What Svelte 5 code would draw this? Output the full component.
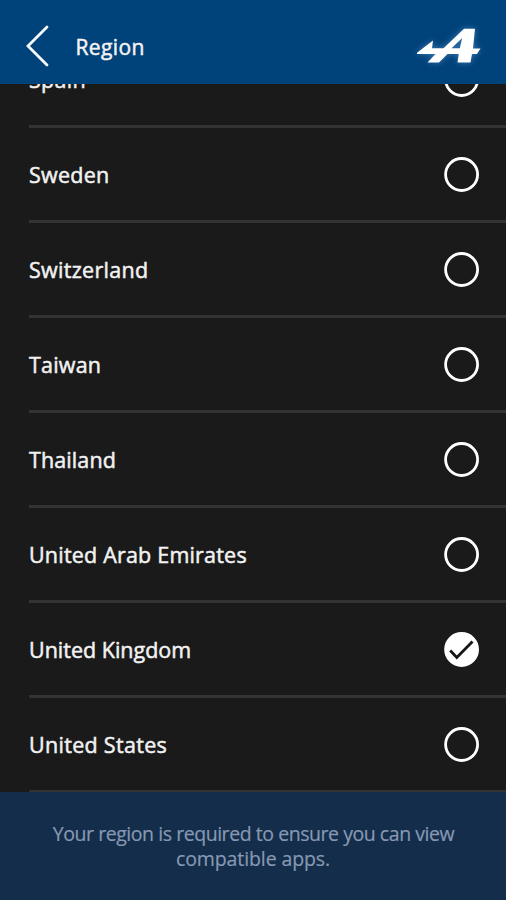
<script>
  let selected = $state('United Kingdom');

  const regions = [
    { name: 'Spain', spacing: 0.3 },
    { name: 'Sweden', spacing: 0.25 },
    { name: 'Switzerland', spacing: 0.3 },
    { name: 'Taiwan', spacing: 0.2 },
    { name: 'Thailand', spacing: 0.1 },
    { name: 'United Arab Emirates', spacing: 0.2 },
    { name: 'United Kingdom', spacing: 0 },
    { name: 'United States', spacing: 0.3 }
  ];
</script>

<div class="screen">
  <header>
    <button class="back" aria-label="Back">
      <svg width="24" height="44" viewBox="0 0 24 44">
        <path d="M22 3 L3 22 L22 41" />
      </svg>
    </button>
    <h1>Region</h1>
    <svg class="logo" width="66" height="38" viewBox="0 0 66 38">
      <path fill-rule="evenodd" d="M2 25.8 L18 13.5 L17 21.3 H28.5 L49 1.8 H60 L58 21.5 H65.5 L62 27 H57 L55.5 35.5 H42.5 L43.8 27 H32.5 L24 35.5 H12.5 L20.5 27 H2 Z M36.5 21.3 H44.8 L47.2 11 Z" />
    </svg>
  </header>

  <main>
    <ul>
      {#each regions as region}
        <li>
          <button class="row" onclick={() => (selected = region.name)}>
            <span class="name" style="letter-spacing: {region.spacing}px">{region.name}</span>
            <svg class="radio" class:checked={selected === region.name} width="36" height="36" viewBox="0 0 36 36">
              <circle cx="17.6" cy="17.5" r="16" />
              {#if selected === region.name}
                <path d="M6.2 18.5 L12.8 25.5 L28.5 9.5" />
              {/if}
            </svg>
          </button>
        </li>
      {/each}
    </ul>
  </main>

  <footer>
    <p class="first">Your region is required to ensure you can view</p>
    <p>compatible apps.</p>
  </footer>
</div>

<style>
  :global(body) {
    margin: 0;
    background: #1a1a1a;
  }

  .screen {
    display: flex;
    flex-direction: column;
    height: 900px;
    overflow: hidden;
    background: #1a1a1a;
    color: #f2f2f2;
    font-family: "Open Sans", "Noto Sans", sans-serif;
  }

  header {
    display: flex;
    align-items: center;
    flex: none;
    box-sizing: border-box;
    height: 84px;
    padding: 8px 25px 0 25px;
    background: #00427a;
  }

  button {
    padding: 0;
    border: 0;
    background: none;
    color: inherit;
    font: inherit;
  }

  .back {
    display: flex;
  }

  .back path {
    fill: none;
    stroke: #f4f8ff;
    stroke-width: 2.8;
    stroke-linecap: round;
  }

  h1 {
    flex: 1;
    margin: 1px 0 0 26.5px;
    font-size: 21px;
    font-weight: 400;
    line-height: 28px;
    letter-spacing: 0.4px;
    -webkit-text-stroke: 0.5px currentColor;
  }

  .logo {
    overflow: visible;
    fill: #fff;
    filter: drop-shadow(0 0 3px rgba(120, 180, 235, 0.5));
  }

  main {
    display: flex;
    flex: 1;
    flex-direction: column;
    justify-content: flex-end;
    min-height: 0;
    overflow: hidden;
  }

  ul {
    margin: 0 0 -1.5px 29px;
    padding: 0;
    list-style: none;
  }

  li {
    box-sizing: border-box;
    height: 94.94px;
    border-bottom: 3px solid #333;
  }

  .row {
    display: flex;
    align-items: center;
    justify-content: space-between;
    box-sizing: border-box;
    width: 100%;
    height: 100%;
    padding: 1px 26px 0 0;
    text-align: left;
  }

  .name {
    padding-top: 1px;
    font-size: 21.5px;
    line-height: 30px;
    white-space: nowrap;
    -webkit-text-stroke: 0.5px currentColor;
  }

  .radio circle {
    fill: none;
    stroke: #fff;
    stroke-width: 2.8;
  }

  .radio path {
    fill: none;
    stroke: #161616;
    stroke-width: 2.8;
  }

  .radio.checked circle {
    fill: #fff;
  }

  footer {
    flex: none;
    box-sizing: border-box;
    height: 108.5px;
    padding-top: 29px;
    background: #132d4a;
    color: #8798b3;
    text-align: center;
  }

  p {
    margin: 0;
    font-size: 19.5px;
    line-height: 25.5px;
    letter-spacing: -0.1px;
    white-space: nowrap;
    -webkit-text-stroke: 0.2px currentColor;
  }

  .first {
    padding-left: 1px;
    letter-spacing: -0.45px;
  }
</style>
